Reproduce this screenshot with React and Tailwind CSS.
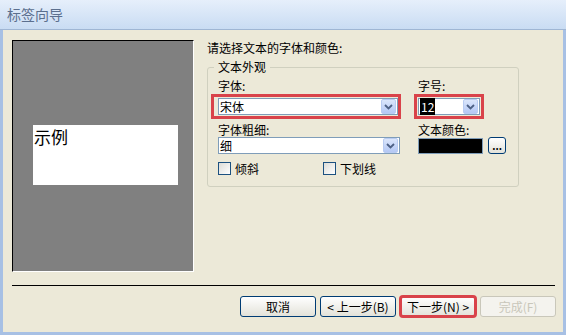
const font = { fontFamily: '"Noto Sans CJK SC", "Noto Sans", sans-serif' };

function Arrow() {
  return (
    <span className="flex h-[15px] w-[15px] items-center justify-center rounded-[2px] border border-[#b9ccf2] bg-gradient-to-b from-[#dbe6fb] to-[#b4c8f5]">
      <svg width="9" height="6" viewBox="0 0 9 6">
        <path d="M1 1 L4.5 4.5 L8 1" fill="none" stroke="#4d6185" strokeWidth="1.8" />
      </svg>
    </span>
  );
}

function Combo({ w, children }) {
  return (
    <div className={`flex h-[17px] items-center justify-between border border-[#7f9db9] bg-white pl-[1px] pr-[1px] ${w}`}>
      <span className="text-[12px] leading-none text-black">{children}</span>
      <Arrow />
    </div>
  );
}

function Check({ label }) {
  return (
    <div className="flex items-center gap-[4px]">
      <span className="h-[13px] w-[13px] border border-[#1c5180] bg-gradient-to-br from-[#dcdcd7] to-white" />
      <span className="text-[12px] leading-none">{label}</span>
    </div>
  );
}

function Btn({ children, disabled, red }) {
  return (
    <div
      className={`flex h-[21px] w-[76px] items-center justify-center rounded-[3px] border text-[12px] ${
        disabled
          ? "border-[#c9c7ba] bg-[#f4f3ee] text-[#c9c7ba]"
          : "border-[#003c74] bg-gradient-to-b from-white to-[#e3e2d9] text-black"
      } ${red ? "outline outline-[3px] outline-[#d9434a] -outline-offset-[2px]" : ""}`}
    >
      {children}
    </div>
  );
}

export default function App() {
  return (
    <div className="flex h-[335px] w-[566px] flex-col bg-[#ece9d8]" style={font}>
      <div className="flex h-[30px] items-center border-b border-[#9fb6d4] bg-gradient-to-b from-[#e6effb] to-[#c9dcf3] pl-[7px]">
        <span className="text-[14px] text-[#5b6f8e]">标签向导</span>
      </div>
      <div className="flex flex-1 flex-col border-x-[3px] border-b-[3px] border-[#a7c0e4] pl-[9px] pr-[5px] pt-[10px]">
        <div className="flex gap-[13px]">
          <div className="flex h-[232px] w-[182px] items-center border-l border-t border-l-black border-t-black border-r border-b border-r-white border-b-white bg-[#808080] pl-[20px]">
            <div className="mb-[2px] h-[60px] w-[145px] bg-white px-[1px]">
              <span className="text-[17px] leading-[22px] text-black">示例</span>
            </div>
          </div>
          <div className="flex w-[312px] flex-col">
            <div className="mt-[1px] text-[12px] leading-[14px] text-black">请选择文本的字体和颜色:</div>
            <div className="relative mt-[12px] h-[120px] rounded-[3px] border border-[#d0d0bf] pl-[10px] pt-[11px]">
              <span className="absolute -top-[8px] left-[6px] bg-[#ece9d8] px-[4px] text-[12px] leading-[14px]">文本外观</span>
              <div className="flex gap-[17px]">
                <div className="flex flex-col">
                  <span className="text-[12px] leading-[14px]">字体:</span>
                  <div className="mt-[1px] border-[3px] border-[#d9434a] -ml-[7px] pl-[4px] pr-[1px] py-[1px] w-[190px]">
                    <Combo w="w-[180px]">宋体</Combo>
                  </div>
                  <span className="mt-[4px] text-[12px] leading-[14px]">字体粗细:</span>
                  <div className="mt-0">
                    <Combo w="w-[182px]">细</Combo>
                  </div>
                </div>
                <div className="flex flex-col">
                  <span className="text-[12px] leading-[14px]">字号:</span>
                  <div className="mt-[1px] -ml-[4px] border-[3px] border-[#d9434a] pl-[1px] pr-[1px] py-[1px] w-[70px]">
                    <Combo w="w-[62px]">
                      <span className="bg-black px-[1px] text-white">12</span>
                    </Combo>
                  </div>
                  <span className="mt-[4px] text-[12px] leading-[14px]">文本颜色:</span>
                  <div className="mt-0 flex items-center gap-[5px]">
                    <span className="h-[16px] w-[65px] border border-[#7f9db9] bg-black" />
                    <span className="flex h-[17px] w-[18px] items-center justify-center rounded-[3px] border border-[#003c74] bg-gradient-to-b from-white to-[#e3e2d9] text-[10px] font-bold leading-none">...</span>
                  </div>
                </div>
              </div>
              <div className="mt-[8px] flex gap-[64px]">
                <Check label="倾斜" />
                <Check label="下划线" />
              </div>
            </div>
          </div>
        </div>
        <div className="mt-[13px] h-px w-[543px] bg-black" />
        <div className="mt-[10px] flex justify-end gap-[4px] pr-[2px]">
          <Btn>取消</Btn>
          <Btn>&lt; 上一步(B)</Btn>
          <Btn red>下一步(N) &gt;</Btn>
          <Btn disabled>完成(F)</Btn>
        </div>
      </div>
    </div>
  );
}
